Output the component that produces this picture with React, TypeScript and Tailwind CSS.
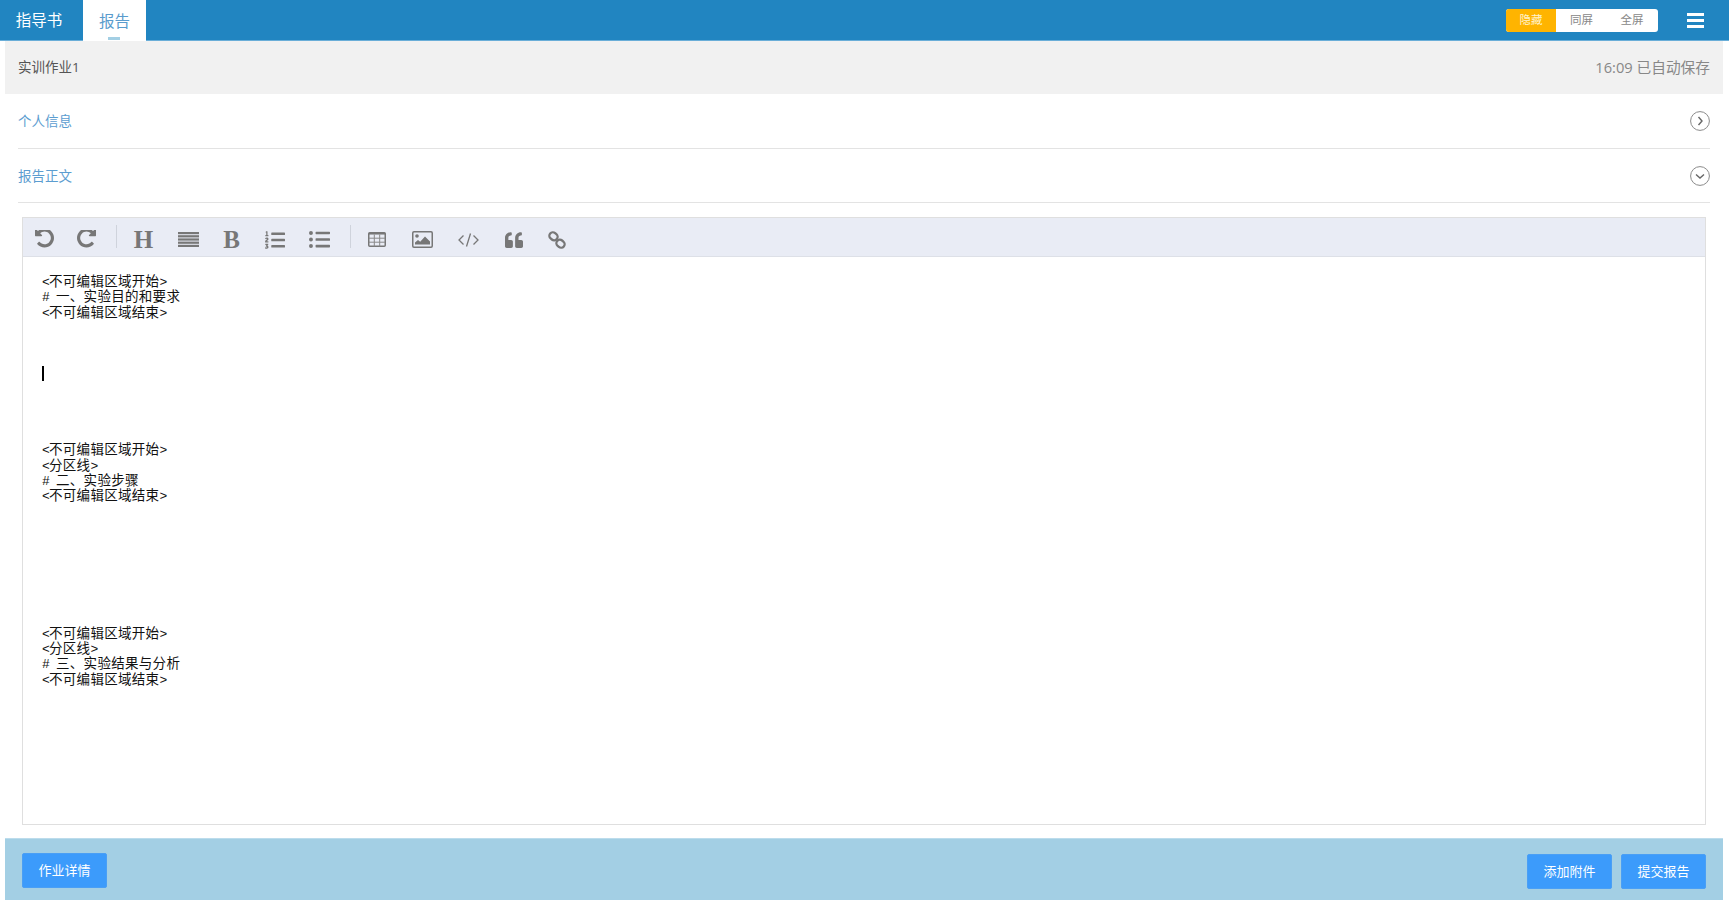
import React from "react";
import { FaListOl, FaListUl, FaQuoteLeft } from "react-icons/fa";

const undoPath =
  "M1536 640q0 156-61 298t-164 245-245 164-298 61q-172 0-327-72.5t-264-204.5q-7-10-6.5-22.5t8.5-20.5l137-138q10-9 25-9 16 2 23 12 73 95 179 147t225 52q104 0 198.5-40.5t163.5-109.5 109.5-163.5 40.5-198.5-40.5-198.5-109.5-163.5-163.5-109.5-198.5-40.5q-98 0-188 35.5t-160 101.5l137 138q31 30 14 69-17 40-59 40h-448q-26 0-45-19t-19-45v-448q0-42 40-59 39-17 69 14l130 129q107-101 244.5-156.5t284.5-55.5q156 0 298 61t245 164 164 245 61 298z";

const Undo = ({ flip = false }: { flip?: boolean }) => (
  <svg viewBox="0 0 1536 1536" className={flip ? "w-[19px] h-[19px] -scale-x-100" : "w-[19px] h-[19px]"} fill="#777">
    <path d={undoPath} />
  </svg>
);

const Code = () => (
  <svg viewBox="0 0 21 14" className="w-[21px] h-[14px]" fill="none" stroke="#777" strokeWidth="1.3">
    <path d="M5.5 2.5 1 7l4.5 4.5M15.5 2.5 20 7l-4.5 4.5M12.5 0.5 8.5 13.5" />
  </svg>
);

const LinkIcon = () => (
  <svg viewBox="0 0 18 18" className="w-[18px] h-[18px]" fill="none" stroke="#777" strokeWidth="2.3">
    <rect x="1.2" y="1.8" width="8.6" height="7" rx="3.5" transform="rotate(40 5.5 5.3)" />
    <rect x="8.2" y="9.2" width="8.6" height="7" rx="3.5" transform="rotate(40 12.5 12.7)" />
  </svg>
);

const Justify = () => (
  <svg viewBox="0 0 21 15" className="w-[21px] h-[15px]" fill="#777">
    <rect y="0" width="21" height="2.2" />
    <rect y="3.2" width="21" height="2.2" />
    <rect y="6.4" width="21" height="2.2" />
    <rect y="9.6" width="21" height="2.2" />
    <rect y="12.8" width="21" height="2.2" />
  </svg>
);

const TableIcon = () => (
  <svg viewBox="0 0 18 15" className="w-[18px] h-[15px]" fill="none">
    <rect x="0.75" y="0.75" width="16.5" height="13.5" rx="1" stroke="#777" strokeWidth="1.5" />
    <rect x="0.75" y="0.75" width="16.5" height="1.8" fill="#777" />
    <path d="M6.3 2.5v12M11.7 2.5v12M1 6.2h16M1 10.2h16" stroke="#888" strokeWidth="1" />
  </svg>
);

const ImageIcon = () => (
  <svg viewBox="0 0 21 17" className="w-[21px] h-[17px]" fill="none">
    <rect x="0.75" y="0.75" width="19.5" height="15.5" rx="1.2" stroke="#777" strokeWidth="1.5" />
    <circle cx="5" cy="5" r="1.8" fill="#777" />
    <path d="M3 13.5v-2l3-2.4 2.2 1.6L13 5.6l5 5v2.9z" fill="#777" />
  </svg>
);

const Tool = ({ children, w }: { children: React.ReactNode; w: string }) => (
  <div className={`${w} h-full flex items-center justify-center shrink-0`}>{children}</div>
);

const Letter = ({ c }: { c: string }) => (
  <span className="text-[25px] leading-none font-bold text-[#777] font-['Liberation_Serif',serif]">{c}</span>
);

const Circle = ({ down }: { down?: boolean }) => (
  <svg viewBox="0 0 20 20" className="w-[20px] h-[20px]" fill="none" stroke="#8a8a8a">
    <circle cx="10" cy="10" r="9.4" strokeWidth="1" />
    <path d={down ? "M6 8.5l4 3.5 4-3.5" : "M8.5 6l3.5 4-3.5 4"} strokeWidth="1.4" stroke="#666" />
  </svg>
);

const Btn = ({ children }: { children: React.ReactNode }) => (
  <div className="w-[85px] h-[35px] rounded-[2px] bg-[#3c9bfb] border border-[#4a9ff5] text-white text-[13px] flex items-center justify-center">
    {children}
  </div>
);

const Line = ({ text }: { text: string }) => (
  <div className="h-[15.3px] whitespace-pre">
    {text.split(/([\x20-\x7e]+)/).map((part, i) =>
      /^[\x20-\x7e]+$/.test(part) ? (
        <span key={i} className="text-[13px] tracking-[-0.8px]">{part}</span>
      ) : (
        <span key={i}>{part}</span>
      )
    )}
  </div>
);

const lines = [
  "<不可编辑区域开始>",
  "# 一、实验目的和要求",
  "<不可编辑区域结束>",
  "", "", "",
  "|",
  "", "", "", "",
  "<不可编辑区域开始>",
  "<分区线>",
  "# 二、实验步骤",
  "<不可编辑区域结束>",
  "", "", "", "", "", "", "", "",
  "<不可编辑区域开始>",
  "<分区线>",
  "# 三、实验结果与分析",
  "<不可编辑区域结束>",
];

export default function App() {
  return (
    <div className="h-[900px] w-[1729px] overflow-hidden bg-white flex flex-col font-['Open_Sans','Noto_Sans_CJK_SC',sans-serif]">
      <header className="h-[41px] shrink-0 bg-[#2185c1] border-b border-[#6aaed8] flex items-stretch text-[15.5px] font-['Noto_Sans_CJK_SC',sans-serif]">
        <div className="w-[83px] flex items-center justify-center text-white pr-[5px]">指导书</div>
        <div className="relative w-[63px] bg-white -mb-px flex items-center justify-center text-[#5a9ccd]">
          报告
          <span className="absolute left-[25px] bottom-[1px] w-[12px] h-[3px] bg-[#a3cfe4]" />
        </div>
        <div className="ml-auto flex items-center pr-[25px]">
          <div className="w-[152px] h-[23px] rounded-[3px] bg-white flex overflow-hidden text-[11.5px] text-[#888] mr-[29px]">
            <div className="w-[50px] bg-[#ffb400] text-[#fff3cf] flex items-center justify-center">隐藏</div>
            <div className="w-[51px] flex items-center justify-center">同屏</div>
            <div className="w-[50px] flex items-center justify-center">全屏</div>
          </div>
          <div className="w-[17px] flex flex-col gap-[3px]">
            <span className="h-[3px] bg-white" />
            <span className="h-[3px] bg-white" />
            <span className="h-[3px] bg-white" />
          </div>
        </div>
      </header>

      <main className="flex-1 min-h-0 flex flex-col ml-[5px] mr-[6px]">
        <div className="h-[53px] shrink-0 bg-[#f1f1f1] flex items-center justify-between px-[13px] text-[13.5px]">
          <span className="text-[#555]">实训作业1</span>
          <span className="text-[#888] text-[14.7px]">16:09 已自动保存</span>
        </div>

        <div className="mx-[13px] h-[55px] shrink-0 border-b border-[#e3e3e3] flex items-center justify-between text-[13.5px] text-[#5c9dd0]">
          <span className="pt-[1px]">个人信息</span>
          <Circle />
        </div>
        <div className="mx-[13px] h-[54px] shrink-0 border-b border-[#e3e3e3] flex items-center justify-between text-[13.5px] text-[#5c9dd0]">
          <span className="pt-[2px]">报告正文</span>
          <Circle down />
        </div>

        <section className="mt-[14px] mx-[17px] h-[608px] shrink-0 border border-[#dfdfdf] flex flex-col">
          <div className="h-[39px] shrink-0 bg-[#e9ecf5] border-b border-[#dde0e7] flex items-center pt-[5px]">
            <Tool w="w-[42px]"><Undo /></Tool>
            <Tool w="w-[42px]"><Undo flip /></Tool>
            <div className="w-px h-[23px] bg-[#cfd3dc] shrink-0 ml-[8.5px] -mt-[6px]" />
            <Tool w="w-[54px]"><Letter c="H" /></Tool>
            <Tool w="w-[36px]"><Justify /></Tool>
            <Tool w="w-[50px]"><Letter c="B" /></Tool>
            <Tool w="w-[36px]"><FaListOl className="w-[20px] h-[20px] text-[#777]" /></Tool>
            <Tool w="w-[54.6px]"><FaListUl className="w-[21px] h-[21px] text-[#777]" /></Tool>
            <div className="w-px h-[23px] bg-[#cfd3dc] shrink-0 ml-[3px] -mt-[6px]" />
            <Tool w="w-[52px]"><TableIcon /></Tool>
            <Tool w="w-[38.6px]"><ImageIcon /></Tool>
            <Tool w="w-[54px]"><Code /></Tool>
            <Tool w="w-[36.4px]"><FaQuoteLeft className="w-[18px] h-[18px] text-[#777]" /></Tool>
            <Tool w="w-[50px]"><LinkIcon /></Tool>
          </div>
          <div className="flex-1 pt-[18px] pl-[19px] text-[13.5px] tracking-[0.3px] leading-[15.3px] text-[#111] font-['Liberation_Mono','Noto_Sans_CJK_SC',monospace]">
            {lines.map((l, i) =>
              l === "|" ? (
                <div key={i} className="h-[15.3px] flex items-center -translate-y-[1px]">
                  <span className="w-[2px] h-[15px] bg-black" />
                </div>
              ) : (
                <Line key={i} text={l} />
              )
            )}
          </div>
        </section>

        <footer className="mt-[13px] flex-1 bg-[#a3cfe4] border-t border-[#bcdcec] flex items-start justify-between px-[17px]">
          <div className="mt-[14px]"><Btn>作业详情</Btn></div>
          <div className="mt-[15px] flex gap-[9px]">
            <Btn>添加附件</Btn>
            <Btn>提交报告</Btn>
          </div>
        </footer>
      </main>
    </div>
  );
}
